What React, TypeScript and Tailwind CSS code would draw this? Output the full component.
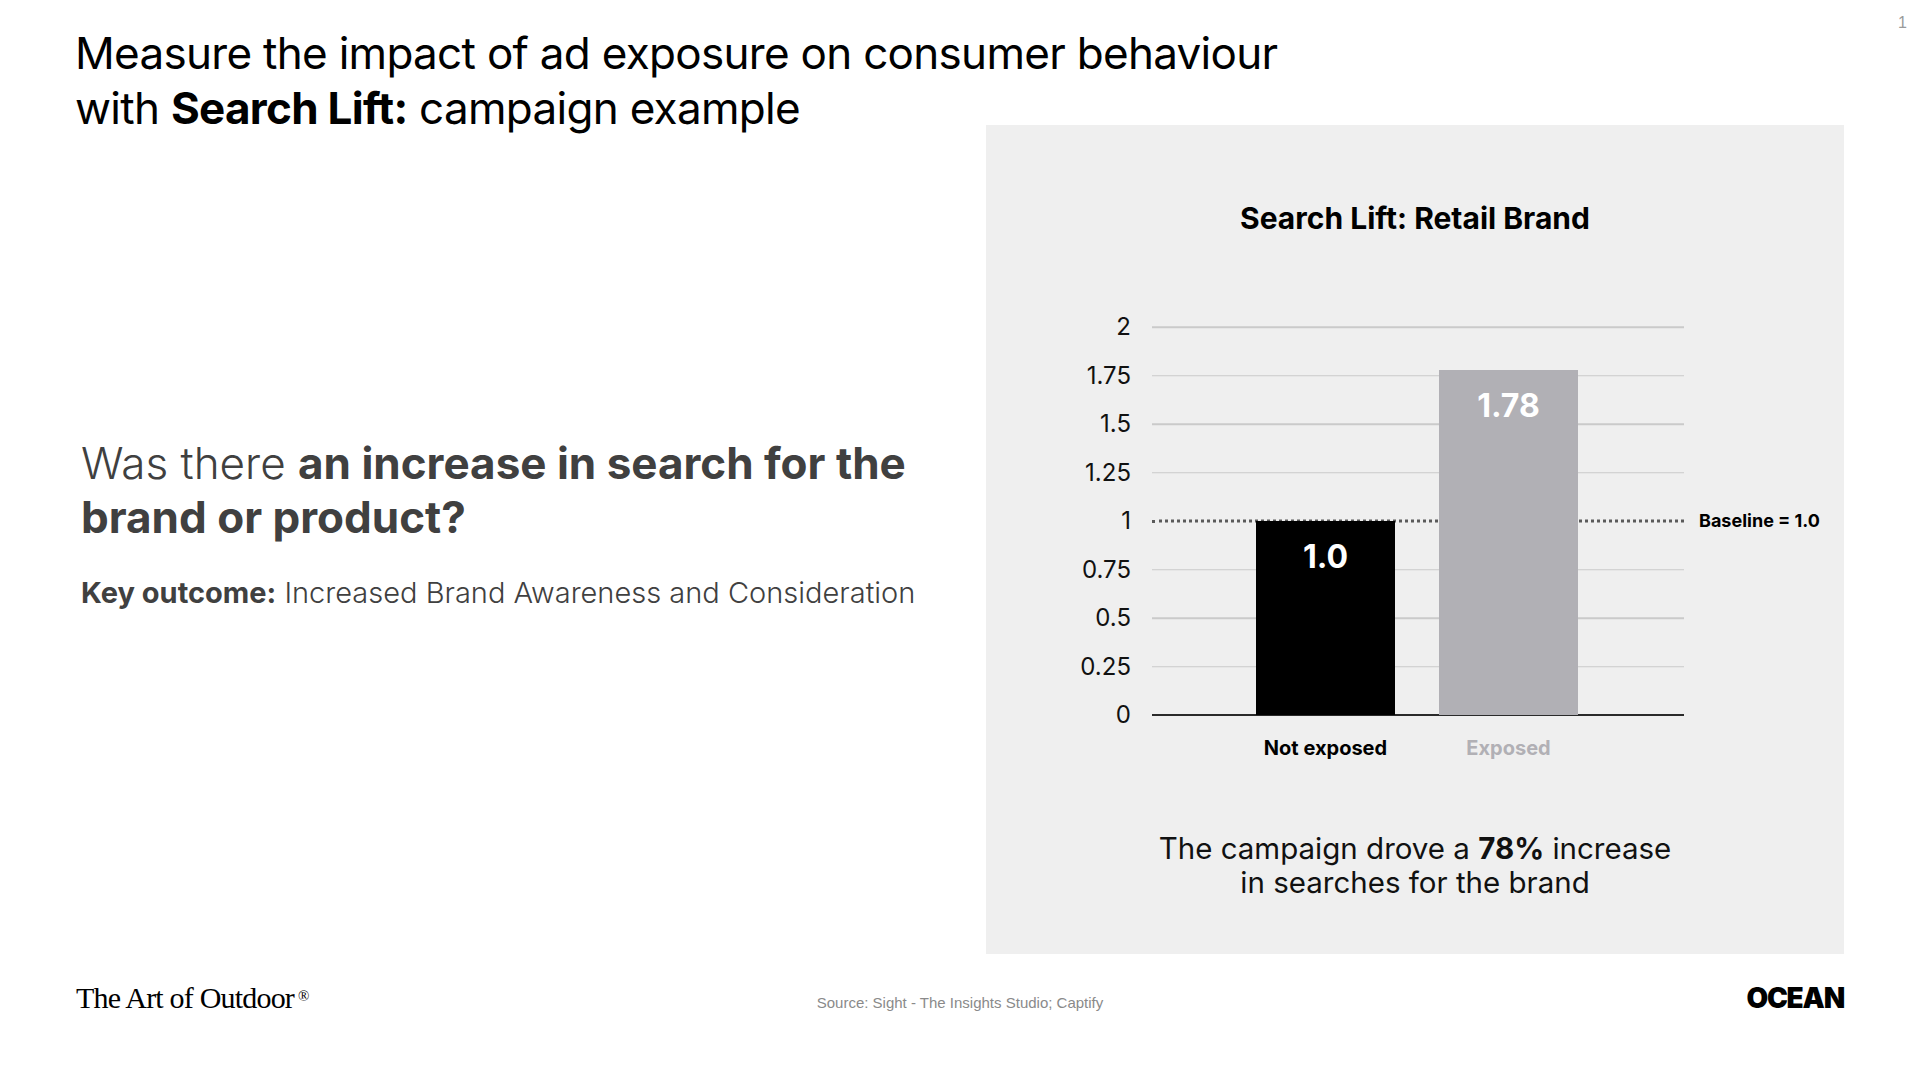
import React from 'react';

// y axis: 2 units over 388px
const SCALE = 194;
const TICKS = [2, 1.75, 1.5, 1.25, 1, 0.75, 0.5, 0.25, 0];

const BARS = [
  { label: 'Not exposed', text: '1.0', pos: 'left-[104px] h-[194px] bg-black', labelColor: 'text-black' },
  { label: 'Exposed', text: '1.78', pos: 'left-[287px] h-[345px] bg-[#b1b0b5]', labelColor: 'text-[#b1b0b5]' },
];

function Chart() {
  return (
    <div className="ml-[166px] w-[532px]">
      <div className="relative h-[388px]">
        {TICKS.map((t) => (
          <div key={t} className="absolute left-0 right-0" style={{ top: (2 - t) * SCALE }}>
            {t !== 1 && t !== 0 && <div className="h-[1.5px] -translate-y-1/2 bg-[#cacaca]" />}
            {t === 1 && <div className="-translate-y-1/2 border-t-[3px] border-dotted border-[#5a5a5a]" />}
            {t === 0 && <div className="h-[2px] -translate-y-1/2 bg-[#2a2a2a]" />}
            <span className="absolute right-[calc(100%+21px)] top-0 -translate-y-1/2 text-[24px] leading-none text-[#111]">
              {t}
            </span>
          </div>
        ))}

        {BARS.map((b) => (
          <div key={b.label} className={`absolute bottom-0 flex w-[139px] justify-center pt-[20px] ${b.pos}`}>
            <span className="text-[32px] font-bold leading-none text-white">{b.text}</span>
          </div>
        ))}

        <span className="absolute left-[calc(100%+15px)] top-[194px] -translate-y-1/2 whitespace-nowrap text-[18px] font-bold leading-none text-black">
          Baseline = 1.0
        </span>
      </div>

      <div className="mt-[23px] flex gap-[44px] pl-[104px]">
        {BARS.map((b) => (
          <div key={b.label} className={`w-[139px] whitespace-nowrap text-center text-[20px] font-bold leading-none ${b.labelColor}`}>
            {b.label}
          </div>
        ))}
      </div>
    </div>
  );
}

export default function App() {
  return (
    <div className="relative flex h-[1080px] w-[1920px] flex-col overflow-hidden bg-white font-['Inter',sans-serif] text-black">
      {/* page number */}
      <span className="absolute right-[13px] top-[11px] font-['Liberation_Sans',sans-serif] text-[16px] text-[#9a9a9a]">1</span>

      <div className="flex items-start">
        {/* Left column */}
        <div className="w-[986px] shrink-0 pl-[75px]">
          <h1 className="whitespace-nowrap pt-[26px] text-[44px] font-normal leading-[55px] tracking-[-0.016em]">
            Measure the impact of ad exposure on consumer behaviour
            <br />
            with <span className="font-bold">Search Lift:</span> campaign example
          </h1>

          <div className="ml-[6px] mt-[300px] text-[#404040]">
            <p className="whitespace-nowrap text-[44px] font-light leading-[54px]">
              Was there <span className="font-bold">an increase in search for the</span>
              <br />
              <span className="font-bold">brand or product?</span>
            </p>
            <p className="mt-[31px] whitespace-nowrap text-[29px] font-light leading-[36px]">
              <span className="font-bold">Key outcome:</span> Increased Brand Awareness and Consideration
            </p>
          </div>
        </div>

        {/* Chart panel */}
        <div className="mt-[125px] h-[829px] w-[858px] shrink-0 bg-[#efefef] pt-[75px]">
          <h2 className="text-center text-[30px] font-bold leading-[36px]">Search Lift: Retail Brand</h2>
          <div className="mt-[91px]">
            <Chart />
          </div>
          <p className="mt-[73px] text-center text-[29.5px] leading-[34px] text-[#111]">
            The campaign drove a <span className="font-bold">78%</span> increase
            <br />
            in searches for the brand
          </p>
        </div>
      </div>

      {/* Footer */}
      <div className="mt-[29px] grid grid-cols-3 items-baseline px-[76px]">
        <div className="whitespace-nowrap font-['Liberation_Serif',serif] text-[30px] leading-none tracking-[-0.8px] text-black">
          The Art of Outdoor<sup className="ml-[4px] text-[15px] tracking-normal">®</sup>
        </div>
        <div className="text-center font-['Liberation_Sans',sans-serif] text-[15px] leading-none text-[#8a8a8a]">
          Source: Sight - The Insights Studio; Captify
        </div>
        <div className="text-right text-[28px] font-black leading-none tracking-[-1.2px]">OCEAN</div>
      </div>
    </div>
  );
}
